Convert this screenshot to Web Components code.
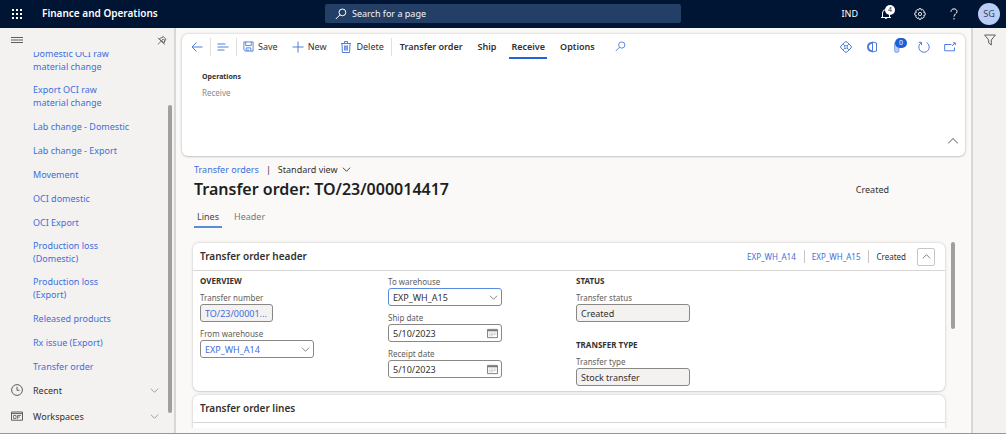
<!DOCTYPE html>
<html lang="en">
<head>
<meta charset="utf-8">
<title>Transfer order - Finance and Operations</title>
<style>
  html, body { margin: 0; height: 100%; }
  body {
    --link: #3e6edb;
    --accent: #2362d8;
    --ink: #323130;
    --line: #d9d7d5;
    --chrome: #f3f2f1;
    --canvas: #faf9f8;
    font: 9px/13px "Noto Sans", "Open Sans", sans-serif;
    color: var(--ink);
    background: var(--canvas);
    overflow: hidden;
  }
</style>
</head>
<body>
<fo-app>
  <fo-topbar slot="top" brand="Finance and Operations" company="IND" user="SG" notices="4"></fo-topbar>

  <fo-sidebar slot="nav">
    <fo-nav-link>Domestic OCI raw material change</fo-nav-link>
    <fo-nav-link>Export OCI raw material change</fo-nav-link>
    <fo-nav-link>Lab change - Domestic</fo-nav-link>
    <fo-nav-link>Lab change - Export</fo-nav-link>
    <fo-nav-link>Movement</fo-nav-link>
    <fo-nav-link>OCI domestic</fo-nav-link>
    <fo-nav-link>OCI Export</fo-nav-link>
    <fo-nav-link>Production loss (Domestic)</fo-nav-link>
    <fo-nav-link>Production loss (Export)</fo-nav-link>
    <fo-nav-link>Released products</fo-nav-link>
    <fo-nav-link>Rx issue (Export)</fo-nav-link>
    <fo-nav-link>Transfer order</fo-nav-link>
    <fo-nav-group slot="groups" icon="clock">Recent</fo-nav-group>
    <fo-nav-group slot="groups" icon="workspace">Workspaces</fo-nav-group>
  </fo-sidebar>

  <fo-action-pane></fo-action-pane>
  <fo-page-head status="Created">Transfer order: TO/23/000014417</fo-page-head>

  <fo-scroll>
    <fo-section heading="Transfer order header" open>
      <fo-summary slot="summary"></fo-summary>
      <fo-column>
        <fo-group heading="OVERVIEW">
          <fo-field label="Transfer number" value="TO/23/00001..." kind="readonly" link short></fo-field>
          <fo-field label="From warehouse" value="EXP_WH_A14" kind="select" link></fo-field>
        </fo-group>
      </fo-column>
      <fo-column>
        <fo-group>
          <fo-field label="To warehouse" value="EXP_WH_A15" kind="select" active></fo-field>
          <fo-field label="Ship date" value="5/10/2023" kind="date"></fo-field>
          <fo-field label="Receipt date" value="5/10/2023" kind="date"></fo-field>
        </fo-group>
      </fo-column>
      <fo-column>
        <fo-group heading="STATUS">
          <fo-field label="Transfer status" value="Created" kind="readonly"></fo-field>
        </fo-group>
        <fo-group heading="TRANSFER TYPE">
          <fo-field label="Transfer type" value="Stock transfer" kind="readonly"></fo-field>
        </fo-group>
      </fo-column>
    </fo-section>
    <fo-section heading="Transfer order lines" cut></fo-section>
  </fo-scroll>

  <fo-rail slot="rail"></fo-rail>
</fo-app>

<script>
const ICONS = {
  waffle: ['0 0 12 12', '<g fill="currentColor" stroke="none"><path d="M1 1h2v2H1zM5 1h2v2H5zM9 1h2v2H9zM1 5h2v2H1zM5 5h2v2H5zM9 5h2v2H9zM1 9h2v2H1zM5 9h2v2H5zM9 9h2v2H9z"/></g>'],
  search: ['0 0 12 12', '<circle cx="7.4" cy="4.4" r="3.4"/><path d="M5 6.8.8 11"/>'],
  bell: ['0 0 12 12', '<path d="M1 9.5h10M2.5 9.500V5a3.500 3.500 0 0 1 7 0v4.500M4.800 9.800a1.300 1.300 0 0 0 2.400 0"/>'],
  gear: ['0 0 12 12', '<g stroke-width=".9"><circle cx="6" cy="6" r="1.600"/><path d="M5 .7h2l.4 1.500 1.300-.7 1.600 1.500-.8 1.300 1.700.6v2.200l-1.600.5.7 1.300-1.500 1.500-1.400-.7-.5 1.600H5l-.4-1.600-1.400.7-1.500-1.500.7-1.300-1.600-.5V4.900l1.600-.5-.7-1.400 1.500-1.500 1.400.7z"/></g>'],
  help: ['0 0 12 12', '<path d="M3 3.800C3 1.800 4.300.9 6 .9s3 1 3 2.700C9 5.800 6 5.900 6 8.600M6 10v1.500"/>'],
  menu: ['0 0 12 12', '<path d="M0 3.500h12M0 6h12M0 8.500h12"/>'],
  pin: ['0 0 12 12', '<path d="M7 1.500 11 5.300 9.600 5.900 9 9 7.800 9.600 3 4.800 3.800 3.600 6.600 3.100zM5.300 7.200 1 11.300M1 3.500l8.500 8"/><circle cx="7.500" cy="7" r="1.800"/>'],
  clock: ['0 0 12 12', '<circle cx="6" cy="6" r="5.400"/><path d="M6 2.800v3.500h2.500"/>'],
  workspace: ['0 0 12 12', '<path d="M.5 2h11v8.200H.5zM.5 3.600h11" stroke-width="1"/><path d="M2.500 5.500h2.500v3H2.500zM6.500 8.800V5.500H10M6.500 7H9" stroke-width=".8"/>'],
  down: ['0 0 10 10', '<path d="m1 3 4 4 4-4"/>'],
  up: ['0 0 10 10', '<path d="m1 7 4-4 4 4"/>'],
  back: ['0 0 12 12', '<path d="M11.500 6H1M5.500 1.500 1 6l4.500 4.500"/>'],
  list: ['0 0 12 12', '<path d="M.5 3h8M.5 6h11M.5 9h7"/>'],
  save: ['0 0 12 12', '<path d="M1 1h10v10H2.500L1 9.500zM3 1v4h6V1M3.500 11V7.500h5V11M5.500 9v2"/>'],
  plus: ['0 0 12 12', '<path d="M6 .5v11M.5 6h11"/>'],
  trash: ['0 0 12 12', '<path d="M1 2.500h10M4.500 2.500v-2h3v2M2 2.500l.4 9h7.200l.4-9"/><path d="M4 4.500h4v5H4z" fill="currentColor" fill-opacity=".5" stroke="none"/><path d="M4.500 4.500v5M6 4.500v5M7.500 4.500v5" stroke-width=".7"/>'],
  diamond: ['0 0 12 12', '<path d="M4.800 1.200 1 5a1.400 1.400 0 0 0 0 2l3.800 3.800a1.700 1.700 0 0 0 2.400 0L11 7a1.400 1.400 0 0 0 0-2L7.200 1.200a1.700 1.700 0 0 0-2.400 0zM3.200 3.200l5.600 5.600M8.800 3.200 3.200 8.800"/><path d="m6 4.300 1.700 1.700L6 7.700 4.300 6z" fill="#fff"/>'],
  office: ['0 0 12 12', '<path d="M6.500 1.800C3.500 2 2 3 2 6s1.500 4 4.500 4.200" stroke-width="2"/><path d="M6.500 1 10.500 2v8l-4 1z"/>'],
  clip: ['0 0 12 12', '<rect x="2.500" y="1" width="4.500" height="10.500" rx="2" fill="currentColor" fill-opacity=".4" stroke-opacity=".6"/>'],
  refresh: ['0 0 12 12', '<path d="M8.500 1.500a5.200 5.200 0 1 1-5.300.2M3.500 4.200V1.300H.8"/>'],
  popout: ['0 0 12 12', '<path d="M7.500 3.500H.7v6.300h9.800V6.500M8 5l3-3M9 1.800h2.300v2.300"/>'],
  funnel: ['0 0 12 12', '<path d="M.6 1h10.800L7.300 6v5L4.700 9V6z"/>'],
  calendar: ['0 0 12 12', '<path d="M.6 1.500h10.800v9H.6z"/><path d="M.6 2.800h10.800" stroke-width="1.600"/><path d="M2.500 5.500h7.500M2.500 7h7.500M2.500 8.500h5" stroke-width=".8" stroke-opacity=".7" stroke-dasharray="1 .7"/>']
};
const icon = (name, size = 12) =>
  `<svg viewBox="${ICONS[name][0]}" width="${size}" height="${size}" fill="none" stroke="currentColor" stroke-width="1" aria-hidden="true">${ICONS[name][1]}</svg>`;

const BASE = `
  *, *::before { box-sizing: border-box; }
  :host { display: block; box-sizing: border-box; }
  :host([hidden]) { display: none; }
  svg { display: block; flex: none; }
  a { color: var(--link); text-decoration: none; }
  button { font: inherit; color: inherit; background: none; border: 0; padding: 0; margin: 0; display: inline-flex; align-items: center; }
  h1, h2, h3, p { margin: 0; font-weight: 600; }
`;

function define(name, css, markup) {
  customElements.define(name, class extends HTMLElement {
    connectedCallback() {
      if (this.shadowRoot) return;
      const root = this.attachShadow({ mode: 'open' });
      root.innerHTML = `<style>${BASE}${css}</style>${markup(this)}`;
    }
  });
}

define('fo-app', `
  :host { display: grid; height: 100vh; grid-template: auto minmax(0, 1fr) / 176px minmax(0, 1fr) 35px; border-bottom: 1px solid #8d99ab; }
  .top { grid-column: 1 / -1; }
  main { display: flex; flex-direction: column; min-width: 0; min-height: 0; padding: 6px 6px 5px; }
`, () => `
  <div class="top"><slot name="top"></slot></div>
  <slot name="nav"></slot>
  <main><slot></slot></main>
  <slot name="rail"></slot>`);

define('fo-topbar', `
  :host { background: #001433; color: #fff; padding-bottom: 1px; }
  header { display: grid; grid-template-columns: minmax(0, 1fr) 356px minmax(0, 1fr); align-items: center; height: 27px; }
  .brand { display: flex; align-items: center; gap: 19px; padding-left: 11px; font-weight: 600; font-size: 10px; }
  .search { display: flex; align-items: center; gap: 5px; height: 19px; padding: 0 10px; border-radius: 2px; background: #243f66; }
  input { flex: 1; min-width: 0; border: 0; padding: 0; background: none; color: #fff; font: inherit; outline: 0; }
  input::placeholder { color: #f2f5fa; opacity: 1; }
  .tools { display: flex; align-items: center; justify-content: flex-end; gap: 22px; padding-right: 6px; }
  .bell { position: relative; }
  .badge { position: absolute; left: 5px; top: -3px; width: 10px; height: 10px; border-radius: 5px; background: #fff; color: #14294a; font-size: 7px; line-height: 10px; text-align: center; }
  .avatar { width: 22px; height: 22px; margin-left: -4px; border-radius: 11px; justify-content: center; background: #b9cdf5; color: #2c4270; }
`, el => `
  <header>
    <div class="brand"><button aria-label="Apps">${icon('waffle')}</button><span>${el.getAttribute('brand')}</span></div>
    <label class="search">${icon('search')}<input type="text" placeholder="Search for a page" aria-label="Search for a page"></label>
    <div class="tools">
      <button>${el.getAttribute('company')}</button>
      <button class="bell" aria-label="Notifications">${icon('bell')}<span class="badge">${el.getAttribute('notices')}</span></button>
      <button aria-label="Settings">${icon('gear')}</button>
      <button aria-label="Help">${icon('help')}</button>
      <button class="avatar">${el.getAttribute('user')}</button>
    </div>
  </header>`);

define('fo-sidebar', `
  :host { display: grid; grid-template: 24px minmax(0, 1fr) / minmax(0, 1fr) 4px; column-gap: 2px; padding: 0 2px 5px 11px; background: var(--chrome); border-right: 2px solid var(--line); }
  .bar { grid-column: 1 / -1; display: flex; align-items: center; justify-content: space-between; padding-right: 5px; color: #605e5c; }
  .list { display: flex; flex-direction: column; min-height: 0; }
  nav { flex: 1; min-height: 0; display: flex; flex-direction: column; justify-content: flex-end; overflow: hidden; padding-left: 22px; }
  .groups { display: flex; flex-direction: column; gap: 2px; }
  .track { display: flex; flex-direction: column; padding: 53px 0 15px; }
  .thumb { flex: 1; border-radius: 2px; background: #a19f9d; }
`, () => `
  <div class="bar"><button aria-label="Collapse navigation">${icon('menu')}</button><button aria-label="Pin navigation">${icon('pin', 10)}</button></div>
  <div class="list"><nav><slot></slot></nav><div class="groups"><slot name="groups"></slot></div></div>
  <div class="track"><div class="thumb"></div></div>`);

define('fo-nav-link', `
  :host { display: flex; align-items: center; flex: none; min-height: 24px; padding: 5px 35px 5px 0; }
`, () => `<a href="#"><slot></slot></a>`);

define('fo-nav-group', `
  button { width: 100%; height: 24px; gap: 10px; padding-right: 7px; }
  span { flex: 1; text-align: left; }
  svg { color: #605e5c; }
  span + svg { color: #979593; }
`, el => `<button aria-expanded="false">${icon(el.getAttribute('icon'))}<span><slot></slot></span>${icon('down', 9)}</button>`);

define('fo-action-pane', `
  :host { flex: none; display: flex; flex-direction: column; background: #fff; border-radius: 6px; box-shadow: 0 0 3px rgba(0,0,0,.22), 0 1px 2px rgba(0,0,0,.12); padding-bottom: 9px; }
  .row { display: flex; align-items: center; height: 25px; padding: 0 9px; }
  .row svg { color: #507ddd; }
  i { width: 1px; height: 18px; background: #e1dfdd; margin: 0 6px 0 7px; }
  .cmd { gap: 4px; margin-right: 14px; }
  .cmd.last { margin-right: 0; }
  .tab { height: 25px; margin-right: 11px; padding: 2px 2px 0; border-bottom: 2px solid transparent; font-weight: 600; }
  .tab[aria-selected=true] { border-color: var(--accent); }
  [role=tablist] { display: flex; flex: 1; align-items: center; }
  .find { margin-left: 7px; }
  .icons { display: flex; gap: 14px; }
  .clip { position: relative; }
  .badge { position: absolute; left: 3px; top: -3px; width: 12px; height: 10px; border-radius: 5px; background: #1c5fd6; color: #fff; font-size: 7px; line-height: 10px; text-align: center; }
  .ops { padding: 11px 20px 0; }
  h3 { font-size: 7px; line-height: 13px; font-weight: 700; }
  .ops button { font-size: 8px; line-height: 13px; color: #8a8886; margin-top: 3px; }
  .fold { align-self: flex-end; margin: 36px 6px 0; color: #979593; }
`, () => `
  <div class="row">
    <button aria-label="Back">${icon('back')}</button><i></i>
    <button aria-label="Show list">${icon('list')}</button><i></i>
    <button class="cmd">${icon('save', 11)}Save</button>
    <button class="cmd">${icon('plus')}New</button>
    <button class="cmd last">${icon('trash')}Delete</button><i></i>
    <div role="tablist">
      <button class="tab" role="tab">Transfer order</button>
      <button class="tab" role="tab">Ship</button>
      <button class="tab" role="tab" aria-selected="true">Receive</button>
      <button class="tab" role="tab">Options</button>
      <button class="find" aria-label="Find action">${icon('search', 11)}</button>
    </div>
    <div class="icons">
      <button aria-label="Power Apps">${icon('diamond')}</button>
      <button aria-label="Open in Office">${icon('office')}</button>
      <button class="clip" aria-label="Attachments">${icon('clip')}<span class="badge">0</span></button>
      <button aria-label="Refresh">${icon('refresh')}</button>
      <button aria-label="Open in new window">${icon('popout')}</button>
    </div>
  </div>
  <div class="ops"><h3>Operations</h3><button disabled>Receive</button></div>
  <button class="fold" aria-label="Collapse">${icon('up')}</button>`);

define('fo-page-head', `
  :host { flex: none; padding: 7px 12px 0; }
  .crumbs { display: flex; align-items: center; gap: 7px; }
  .view { gap: 4px; }
  .title { display: flex; align-items: center; justify-content: space-between; }
  h1 { font-size: 16px; line-height: 26px; color: #201f1e; }
  .state { margin-right: 64px; }
  .tabs { display: flex; gap: 9px; margin-top: 2px; }
  .tabs button { height: 24px; padding: 4px 3px 2px; border-bottom: 2px solid transparent; color: #797775; }
  .tabs [aria-selected=true] { border-color: #5b8bdd; color: #484644; }
`, el => `
  <div class="crumbs"><a href="#">Transfer orders</a><span>|</span><button class="view">Standard view ${icon('down', 9)}</button></div>
  <div class="title"><h1><slot></slot></h1><span class="state">${el.getAttribute('status')}</span></div>
  <div class="tabs" role="tablist"><button role="tab" aria-selected="true">Lines</button><button role="tab">Header</button></div>`);

define('fo-scroll', `
  :host { flex: 1; min-height: 0; display: flex; gap: 2px; padding: 10px 10px 0 6px; }
  .view { flex: 1; min-width: 0; overflow: hidden; padding: 5px 4px 0 5px; }
  .stack { display: flex; flex-direction: column; gap: 4px; }
  .bar { width: 4px; height: 46%; margin-top: 4px; border-radius: 2px; background: #a19f9d; }
`, () => `<div class="view"><div class="stack"><slot></slot></div></div><div class="bar"></div>`);

define('fo-section', `
  :host { background: #fff; border-radius: 6px; box-shadow: 0 0 3px rgba(0,0,0,.22), 0 1px 1px rgba(0,0,0,.08); }
  .head { display: flex; align-items: center; justify-content: space-between; height: 28px; padding: 0 10px 0 7px; border-bottom: 1px solid var(--line); }
  h2 { font-size: 10px; }
  .body { display: grid; grid-template-columns: repeat(4, minmax(0, 1fr)); padding: 5px 0; }
  :host([cut]) .body { min-height: 40px; }
`, el => `
  <div class="head"><h2>${el.getAttribute('heading')}</h2><slot name="summary"></slot></div>
  <div class="body"><slot></slot></div>`);

define('fo-summary', `
  :host { display: flex; align-items: center; font-size: 8px; }
  i { width: 1px; height: 13px; background: #c8c6c4; margin: 0 7px 0 8px; }
  button { width: 18px; height: 18px; justify-content: center; margin-left: 11px; border: 1px solid #c8c6c4; border-radius: 2px; color: #797775; }
`, () => `
  <a href="#">EXP_WH_A14</a><i></i><a href="#">EXP_WH_A15</a><i></i><span>Created</span>
  <button aria-label="Collapse section">${icon('up', 9)}</button>`);

define('fo-column', `
  :host { display: flex; flex-direction: column; gap: 18px; padding: 0 7px; }
`, () => `<slot></slot>`);

define('fo-group', `
  :host { display: flex; flex-direction: column; gap: 6px; }
  h3 { font-size: 8px; line-height: 10px; font-weight: 700; }
`, el => `${el.hasAttribute('heading') ? `<h3>${el.getAttribute('heading')}</h3>` : ''}<slot></slot>`);

define('fo-field', `
  label { display: block; font-size: 8px; line-height: 12px; color: #605e5c; }
  .box { display: flex; align-items: center; width: 114px; height: 18px; padding-right: 3px; border: 1px solid #8a8886; border-radius: 3px; background: #fff; color: #797775; }
  :host([short]) .box { width: 73px; }
  :host([kind=readonly]) .box { background: var(--chrome); }
  :host([active]) .box { border-color: #5b8bdd; }
  input, select { flex: 1; min-width: 0; height: 16px; padding: 0 0 0 4px; border: 0; margin: 0; background: none; font: inherit; color: var(--ink); outline: 0; appearance: none; }
  :host([link]) :is(input, select) { color: var(--link); }
`, el => {
  const value = el.getAttribute('value'), kind = el.getAttribute('kind');
  const control = kind === 'select'
    ? `<select id="c"><option>${value}</option></select>${icon('down', 9)}`
    : `<input id="c" type="text" value="${value}"${kind === 'readonly' ? ' readonly' : ''}>${kind === 'date' ? icon('calendar', 11) : ''}`;
  return `<label for="c">${el.getAttribute('label')}</label><div class="box">${control}</div>`;
});

define('fo-rail', `
  :host { display: flex; justify-content: center; align-items: flex-start; padding-top: 6px; background: var(--chrome); border-left: 2px solid var(--line); color: #605e5c; }
`, () => `<button aria-label="Filter">${icon('funnel')}</button>`);
</script>
</body>
</html>
